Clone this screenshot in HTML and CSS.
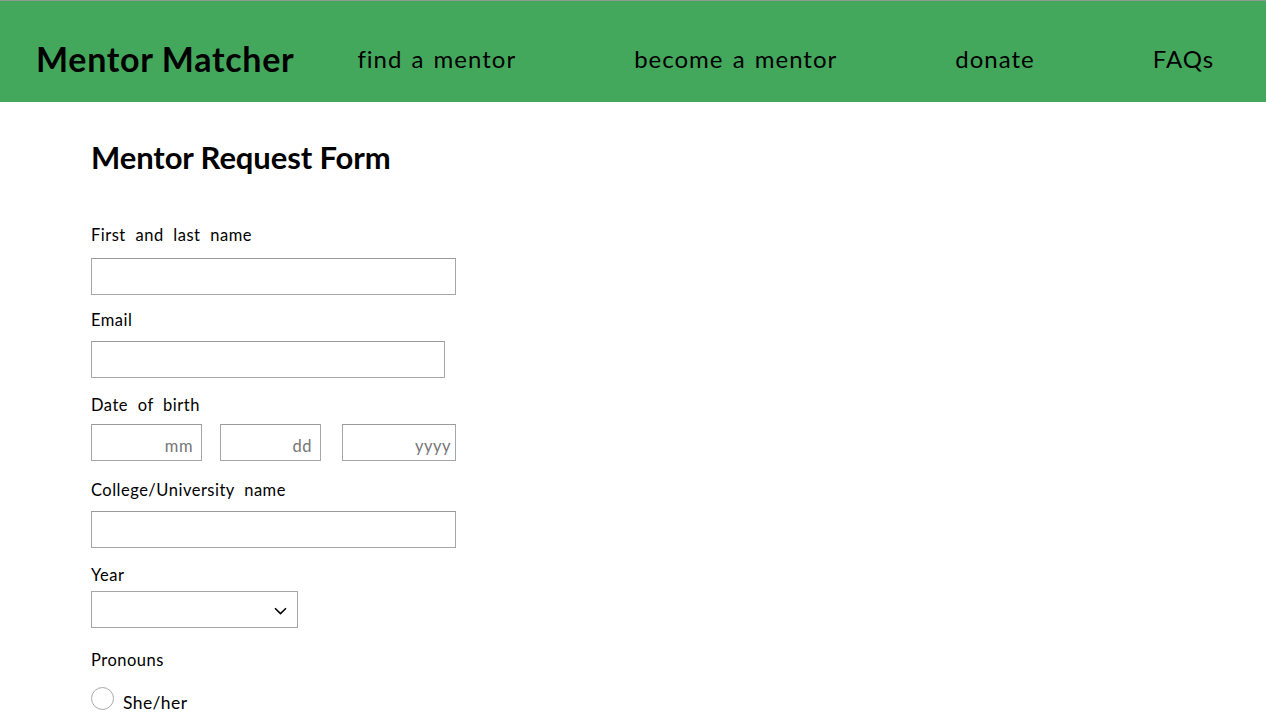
FILE: index.html
```html
<!DOCTYPE html>
<html lang="en">
<head>
<meta charset="utf-8">
<title>Mentor Matcher</title>
<link rel="stylesheet" href="styles.css">
</head>
<body>
<header class="topbar">
  <div class="brand">Mentor Matcher</div>
  <nav class="nav">
    <a class="nav-link" href="#">find a mentor</a>
    <a class="nav-link" href="#">become a mentor</a>
    <a class="nav-link" href="#">donate</a>
    <a class="nav-link" href="#">FAQs</a>
  </nav>
</header>
<main class="content">
  <h1 class="form-title">Mentor Request Form</h1>
  <form class="form">
    <label class="label label-name" for="name">First and last name</label>
    <input class="field field-wide field-name" id="name" type="text">

    <label class="label" for="email">Email</label>
    <input class="field field-email" id="email" type="email">

    <label class="label label-dob">Date of birth</label>
    <div class="dob">
      <input class="field field-date field-mm" type="text" placeholder="mm">
      <input class="field field-date field-dd" type="text" placeholder="dd">
      <input class="field field-date field-yyyy" type="text" placeholder="yyyy">
    </div>

    <label class="label" for="college">College/University name</label>
    <input class="field field-wide" id="college" type="text">

    <label class="label label-year" for="year">Year</label>
    <div class="select-wrap">
      <select class="select" id="year"><option></option></select>
      <svg class="chevron" width="13" height="8" viewBox="0 0 13 8"><path d="M1 1.2 L6.5 6.6 L12 1.2" fill="none" stroke="#000" stroke-width="1.6"/></svg>
    </div>

    <label class="label label-pronouns">Pronouns</label>
    <label class="radio-row"><span class="radio"></span><span class="radio-text">She/her</span></label>
  </form>
</main>
</body>
</html>
```
FILE: styles.css
```css
html, body {
  margin: 0;
  padding: 0;
  background: #ffffff;
}
body {
  font-family: "Lato", "Noto Sans", sans-serif;
  color: #000;
  overflow: hidden;
}
.topbar {
  box-sizing: border-box;
  height: 102px;
  border-top: 1px solid #8f9b92;
  background: #43a85c;
  display: flex;
  align-items: flex-start;
  padding: 38px 0 0 36px;
}
.brand {
  font-size: 34px;
  line-height: 40px;
  font-weight: 700;
  letter-spacing: 0.7px;
  margin-right: 63px;
}
.nav {
  display: flex;
  gap: 118px;
  margin-top: 5px;
}
.nav-link {
  color: #000;
  text-decoration: none;
  font-size: 24px;
  line-height: 30px;
  letter-spacing: 1px;
  word-spacing: 2px;
}
.content {
  padding: 35px 0 0 91px;
}
.form-title {
  margin: 0 0 48px;
  font-size: 31px;
  font-weight: 700;
  line-height: 40px;
  letter-spacing: -0.1px;
}
.form {
  display: flex;
  flex-direction: column;
  align-items: flex-start;
}
.label {
  font-size: 16.5px;
  line-height: 20px;
  letter-spacing: 0.5px;
  word-spacing: 5px;
  margin-bottom: 11px;
}
.label-name { margin-bottom: 13px; }
.label-dob { margin-bottom: 9px; }
.field {
  box-sizing: border-box;
  height: 37px;
  border: 1px solid #a6a6a6;
  border-top-color: #9a9a9a;
  border-radius: 0;
  margin: 0 0 17px;
  padding: 0 6px;
  font-family: inherit;
  font-size: 16.5px;
  background: #fff;
}
.field-name { margin-bottom: 15px; }
.field::placeholder {
  color: #767676;
  letter-spacing: 0.5px;
}
.field-wide { width: 365px; }
.field-email { width: 354px; }
.dob {
  display: flex;
}
.field-date {
  text-align: right;
  padding-top: 7px;
  padding-right: 8px;
  margin-bottom: 19px;
}
.field-mm { width: 111px; margin-right: 18px; }
.field-dd { width: 101px; margin-right: 21px; }
.field-yyyy { width: 114px; padding-right: 4px; }
.label-year { margin-bottom: 6px; }
.select-wrap {
  position: relative;
  width: 207px;
  height: 37px;
  margin-bottom: 22px;
}
.select {
  appearance: none;
  -webkit-appearance: none;
  box-sizing: border-box;
  width: 100%;
  height: 100%;
  border: 1px solid #a6a6a6;
  border-radius: 0;
  background: #fff;
  margin: 0;
}
.chevron {
  position: absolute;
  right: 11px;
  top: 16px;
}
.label-pronouns { margin-bottom: 14px; }
.radio-row {
  display: flex;
  align-items: center;
  font-size: 17.5px;
  letter-spacing: 0.4px;
}
.radio {
  width: 23px;
  height: 23px;
  box-sizing: border-box;
  border: 1px solid #a9a9a9;
  border-radius: 50%;
  margin-right: 9px;
}
.radio-text {
  padding-top: 8px;
}
```
